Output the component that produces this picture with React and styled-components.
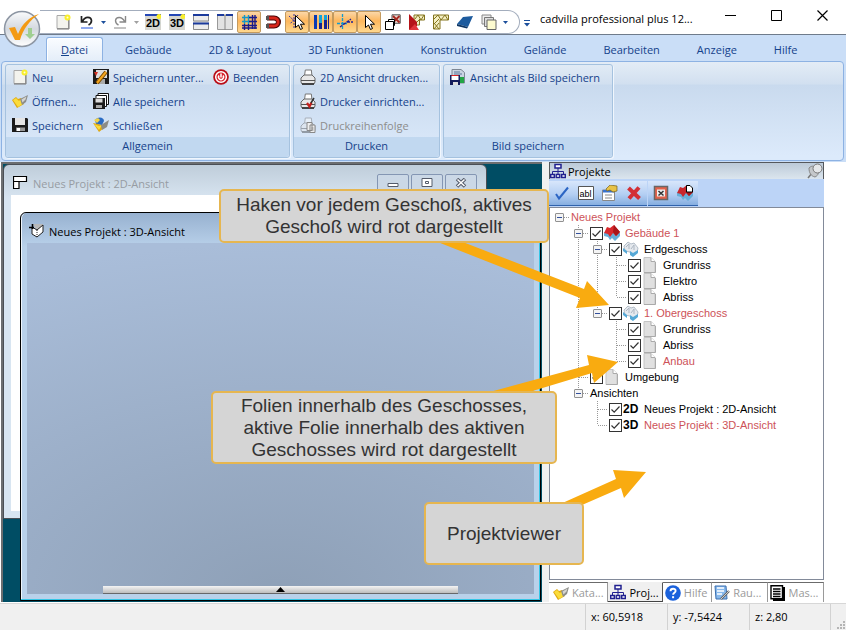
import React from 'react';
import styled, { createGlobalStyle, css } from 'styled-components';

const uiFont = '"Open Sans", "Noto Sans", sans-serif';
const treeFont = '"Liberation Sans", Arial, sans-serif';
const navy = '#15428b';

const GlobalStyle = createGlobalStyle`
  * {
    box-sizing: border-box;
  }

  body {
    margin: 0;
    background: #fff;
    font-family: ${uiFont};
    font-size: 11px;
  }

  button {
    margin: 0;
    padding: 0;
    border: none;
    background: none;
    font: inherit;
    color: inherit;
  }

  svg {
    display: block;
    flex: none;
  }
`;

const Window = styled.div`
  display: flex;
  flex-direction: column;
  min-height: 100vh;
  overflow: hidden;
`;

/* title bar */

const TitleBar = styled.header`
  position: relative;
  display: flex;
  align-items: flex-start;
  height: 35px;
  border-bottom: 1px solid #6f7b8b;
  padding: 0 1px 0 40px;
  background: #fff;
`;

const AppButton = styled.button`
  position: absolute;
  left: 3px;
  top: 10px;
  z-index: 2;
`;

const QuickBar = styled.div`
  display: flex;
  height: 24px;
  margin-top: 10px;
  padding: 0 9px 0 11px;
  border: 1px solid #a3adbd;
  border-left: none;
  border-radius: 0 12px 12px 0;
`;

const QuickButton = styled.button`
  display: flex;
  align-items: center;
  justify-content: center;
  width: 24px;
  height: 22px;
  ${({ $on }) => $on && css`
    border: 1px solid #c49a5e;
    border-radius: 2px;
    background: linear-gradient(#fbd7a8, #fdb65c 45%, #ffd88f);
  `}
`;

const Arrow = styled.button`
  display: flex;
  align-items: center;
  justify-content: center;
  width: 9px;
  color: ${({ $off }) => ($off ? '#a0a0a0' : '#1c4f9c')};
`;

const Overflow = styled(Arrow)`
  width: 14px;
  height: 24px;
  margin-top: 11px;
`;

const Title = styled.div`
  flex: 1;
  min-width: 0;
  padding: 9px 0 0 6px;
  font-size: 11px;
  line-height: 20px;
  white-space: nowrap;
  color: #000;
`;

const Caption = styled.button`
  display: flex;
  align-items: center;
  justify-content: center;
  width: 46px;
  height: 30px;
`;

/* ribbon */

const Tabs = styled.nav`
  display: flex;
  align-items: flex-end;
  gap: 7px;
  height: 26px;
  padding-left: 46px;
  background: #cadef7;
`;

const Tab = styled.button`
  height: 24px;
  padding: 0 14px;
  border: 1px solid transparent;
  border-bottom: none;
  border-radius: 3px 3px 0 0;
  line-height: 22px;
  white-space: nowrap;
  color: ${navy};
  ${({ $on }) => $on && css`
    border-color: #8db2e3;
    background: linear-gradient(#fafcff, #e4eef9);
    box-shadow: inset 1px 1px 0 #fff;
  `}
`;

const Ribbon = styled.div`
  display: flex;
  gap: 3px;
  height: 100px;
  padding: 2px 3px;
  border: 1px solid #8db2e3;
  border-radius: 4px;
  background: linear-gradient(#e3ecf6, #d2e0f0 22%, #c9daee 24%, #dceafb 96%);
`;

const RibbonWrap = styled.div`
  padding: 0 2px 1px 1px;
  background: #cadef7;
`;

const Group = styled.section`
  display: flex;
  flex-direction: column;
  width: ${({ $width }) => $width}px;
  height: 94px;
  border: 1px solid #a5c2df;
  border-radius: 3px;
  box-shadow: 1px 1px 0 #f0f6fd;
`;

const GroupBody = styled.div`
  display: grid;
  grid-template-columns: ${({ $cols }) => $cols};
  grid-template-rows: repeat(3, 24px);
  grid-auto-flow: column;
  padding: 0 6px;
`;

const GroupLabel = styled.div`
  flex: 1;
  border-radius: 0 0 3px 3px;
  background: #c1d8f0;
  line-height: 18px;
  text-align: center;
  color: ${navy};
`;

const Command = styled.button`
  display: flex;
  align-items: center;
  gap: 4px;
  white-space: nowrap;
  color: ${navy};

  &:disabled {
    color: #8d8d8d;
  }
`;

/* workspace */

const Workspace = styled.main`
  position: relative;
  display: flex;
  flex: 1;
  padding-right: 22px;
`;

const Desktop = styled.div`
  position: relative;
  flex: 1;
  margin-left: 1px;
  border-top: 2px solid #6c6e70;
  border-left: 2px solid #6c6e70;
  background: #004d64;
`;

const Splitter = styled.div`
  width: 7px;
  background: #f0f0f0;
`;

const View = styled.section`
  position: absolute;
  display: flex;
  flex-direction: column;
`;

const PlanView = styled(View)`
  top: 0;
  left: 0;
  right: 55px;
  bottom: 83px;
  padding: 0 7px 7px;
  border: 1px solid #4b4f55;
  border-radius: 6px 6px 0 0;
  background: linear-gradient(#bfcdda, #d8e5f1 34px);
`;

const ModelView = styled(View)`
  top: 48px;
  left: 17px;
  right: 1px;
  bottom: 1px;
  padding: 0 6px 6px;
  border: 1px solid #000;
  border-radius: 6px 6px 0 0;
  background: linear-gradient(#97b1d0, #b9d1ea 34px);
  box-shadow: inset -1px -1px 0 #35c6e6, inset 1px 0 0 #eef5fc;
`;

const ViewTitle = styled.div`
  display: flex;
  align-items: center;
  gap: 4px;
  height: 30px;
  padding: 6px 0 0 2px;
  color: ${({ $off }) => ($off ? '#979ca3' : '#000')};
`;

const ViewButtons = styled.div`
  display: flex;
  gap: 2px;
  margin-left: auto;
  padding-right: 2px;
`;

const ViewButton = styled.button`
  display: flex;
  align-items: center;
  justify-content: center;
  width: 32px;
  height: 18px;
  border: 1px solid #8496b3;
  border-radius: 2px 2px 0 0;
  background: #cbd8e6;
`;

const Paper = styled.div`
  flex: 1;
  background: #fff;
`;

const Scene = styled.div`
  display: flex;
  align-items: flex-end;
  flex: 1;
  padding: 0 76px;
  background: radial-gradient(ellipse 120% 100% at 50% 100%, #8ea0b7, #a9bdd9);
`;

const Drawer = styled.button`
  display: flex;
  align-items: center;
  justify-content: center;
  flex: 1;
  height: 8px;
  border-bottom: 1px solid #67686a;
  background: linear-gradient(#f4f4f4, #bdbdbd);
`;

/* project panel */

const Panel = styled.aside`
  display: flex;
  flex-direction: column;
  width: 275px;
`;

const PanelHeader = styled.div`
  display: flex;
  align-items: center;
  justify-content: space-between;
  height: 17px;
  border: 1px solid #55585c;
  border-bottom: none;
  background: linear-gradient(#bccad8, #dbe5ee);
`;

const PanelName = styled.h2`
  display: flex;
  align-items: center;
  gap: 2px;
  margin: 0;
  font-size: 11px;
  font-weight: 400;
`;

const PanelTools = styled.div`
  display: flex;
  gap: 1px;
  height: 28px;
  padding: 2px 0 1px;
  background: #bcd4f7;
`;

const ToolSet = styled.div`
  display: flex;
  align-items: center;
  padding: 0 1px;
  border-bottom: 1px solid #2f62ad;
  background: linear-gradient(#d8e6fb, #b4cff3 55%, #86aee0);
`;

const Tool = styled.button`
  display: flex;
  justify-content: center;
  width: 24px;
`;

const TreeBox = styled.div`
  flex: 1;
  padding-top: 1px;
  border: 1px solid #828a99;
  background: #fff;
  font-family: ${treeFont};
  font-size: 11px;
`;

const TreeRow = styled.div`
  display: flex;
  align-items: center;
  height: 16px;
  white-space: nowrap;
  color: ${({ $active }) => ($active ? '#cd5258' : '#000')};
`;

const dots = 'repeating-linear-gradient(#999 0 1px, transparent 1px 2px)';
const dotsAcross = 'repeating-linear-gradient(90deg, #999 0 1px, transparent 1px 2px)';

const Guide = styled.span`
  display: flex;
  align-items: center;
  width: 19px;
  height: 16px;
  padding-left: 5px;
  background-repeat: no-repeat;
  background-image: ${({ $kind }) => (/[LTE]/.test($kind) ? dots : 'none')},
    ${({ $kind }) => (/[TEH]/.test($kind) ? dotsAcross : 'none')};
  background-size: 1px ${({ $kind }) => ($kind === 'E' ? 8 : 16)}px, 10px 1px;
  background-position: 9px 0, 10px 8px;
`;

const Expander = styled.button`
  display: flex;
  align-items: center;
  justify-content: center;
  width: 9px;
  height: 9px;
  border: 1px solid #919191;
  border-radius: 1px;
  background: #f4f4f4;

  &::after {
    content: '';
    width: 5px;
    height: 1px;
    background: #32509c;
  }
`;

const Entry = styled.label`
  display: flex;
  align-items: center;
  height: 16px;
  padding-left: 2px;
`;

const Check = styled.input`
  appearance: none;
  width: 13px;
  height: 13px;
  margin: 0 1px 0 0;
  border: 1px solid #333;
  background: #fff;

  &:checked {
    background: #fff url("data:image/svg+xml,%3Csvg xmlns='http://www.w3.org/2000/svg' viewBox='0 0 11 11'%3E%3Cpath d='M1.5 5.5l2.7 2.7 5.3-5.7' fill='none' stroke='%23333' stroke-width='1.2'/%3E%3C/svg%3E") center / 11px;
  }
`;

const EntryIcon = styled.span`
  display: flex;
  align-items: center;
  width: 18px;
  margin-right: 3px;
  font-weight: 700;
  font-size: 12px;
  color: #000;
`;

const PanelTabs = styled.div`
  display: grid;
  grid-template-columns: 59fr 54fr 49fr 55fr 56fr;
  height: 20px;
  margin-top: 2px;
`;

const PanelTab = styled.button`
  display: flex;
  align-items: center;
  gap: 3px;
  min-width: 0;
  padding: 0 2px;
  border-top: 1px solid #6b6b6b;
  border-right: 1px solid #9a9a9a;
  white-space: nowrap;
  color: #9a9a9a;

  &:first-child {
    padding-left: 4px;
  }

  ${({ $on }) => $on && css`
    border-top-color: #f0f0f0;
    border-right-color: #555;
    border-bottom: 1px solid #444;
    background: #f0f0f0;
    color: #000;
  `}
`;

/* callouts */

const Notes = styled.div`
  position: absolute;
  top: 0;
  right: 0;
  width: 640px;
  height: 440px;
  pointer-events: none;
`;

const Note = styled.div`
  position: absolute;
  left: ${({ $x }) => $x}px;
  top: ${({ $y }) => $y}px;
  display: flex;
  align-items: center;
  justify-content: center;
  width: ${({ $w }) => $w}px;
  height: ${({ $h }) => $h}px;
  border: 2px solid #e6b650;
  border-radius: 5px;
  background: #d5d5d5;
  font-family: ${treeFont};
  font-size: 19px;
  line-height: 22px;
  text-align: center;
  white-space: pre-line;
  color: #333;
`;

const StatusBar = styled.footer`
  position: relative;
  display: flex;
  align-items: stretch;
  justify-content: flex-end;
  height: 27px;
  margin-top: 1px;
  padding-right: 15px;
  border-top: 1px solid #d7d7d7;
  background: #f0f0f0;
`;

const Cell = styled.div`
  width: 82px;
  padding-left: 5px;
  border-left: 1px solid #d2d2d2;
  line-height: 26px;

  &:last-of-type {
    border-right: 1px solid #d2d2d2;
  }
`;

const Grip = styled.svg`
  position: absolute;
  right: 0;
  bottom: 0;
`;

/* icons, all on a 16 px grid */

const I = ({ children, size = 16 }) => (
  <svg width={size} height={size} viewBox="0 0 16 16" fill="none" aria-hidden="true">{children}</svg>
);

const icons = {
  page: (
    <I>
      <path d="M2 1.5h11.5v13H2z" fill="#f3f3ee" stroke="#a9a9a9" />
      <path d="M2 15h12V5" stroke="#777" />
      <circle cx="12.5" cy="3.5" r="3" fill="#f8ee2c" />
      <circle cx="12.5" cy="3.5" r="1" fill="#fffde0" />
    </I>
  ),
  undo: (
    <I>
      <path d="M2.500 2v6h6M3.500 7.500C6 2 12 2.500 12.500 6.500c0 2-1 3.500-3 4.500" stroke="#222" strokeWidth="1.700" />
      <path d="M2 14h12" stroke="#2255dd" />
    </I>
  ),
  redo: (
    <I>
      <path d="M13.500 2v6h-6M12.500 7.500C10 2 4 2.500 3.500 6.500c0 2 1 3.500 3 4.500" stroke="#888" strokeWidth="1.400" />
      <path d="M2 14h12" stroke="#888" />
    </I>
  ),
  tile2d: <Sheet label="2D" />,
  tile3d: <Sheet label="3D" />,
  rows: (
    <I>
      <path d="M0 0h16v16H0z" fill="#dedede" />
      <path d="M.5 2v5h15V2M.5 10v5.500h15V10" stroke="#8b8b8b" fill="#ececec" />
      <path d="M0 1h16M0 9.500h16" stroke="#1b3a9c" strokeWidth="2" />
    </I>
  ),
  cols: (
    <I>
      <path d="M.5 1.500h15v14H.5z" fill="#e2e2e2" stroke="#999" />
      <path d="M0 1h7M9 1h7" stroke="#1b3a9c" strokeWidth="2" />
      <path d="M8 0v16" stroke="#888" />
    </I>
  ),
  grid: (
    <I>
      <path d="M1 3.500h9M1 7.500h9M3.500 1v9M7.500 1v9" stroke="#1598c8" strokeWidth="1.400" />
      <path d="M11.500 1v14M14 1v14M8 3.500h8M8 7.500h8M1 11.500h15M1 14h15M3.500 10v6M7.500 10v6" stroke="#1a1a8c" strokeWidth="1.400" />
    </I>
  ),
  magnet: (
    <I>
      <path d="M2 4h7c6 0 6 8 0 8H2" stroke="#4b0505" strokeWidth="5" />
      <path d="M3 4h6c5.500 0 5.500 8 0 8H3" stroke="#d8261c" strokeWidth="2.800" />
      <path d="M1 2h3v4H1zM1 10h3v4H1z" fill="#555" />
    </I>
  ),
  snap: (
    <I>
      <path d="M0 2l12 11M9 1L1 10M5 0v14" stroke="#3434a4" strokeDasharray="2 1" />
      <Pointer x={6} />
    </I>
  ),
  bars: (
    <I>
      <path d="M2.500 1v14" stroke="#0b3bb5" strokeWidth="3" />
      <path d="M7.500 1v8M12.500 1v5" stroke="#15a3d8" strokeWidth="3" />
      <path d="M12.500 6v9M7.500 9v6" stroke="#152090" strokeWidth="3" />
      <path d="M15.500 1v14" stroke="#152090" />
    </I>
  ),
  cross: (
    <I>
      <path d="M5.500 0v16M0 9.500h10" stroke="#139bcf" strokeWidth="1.300" strokeDasharray="3 1" />
      <path d="M3 13L14 5M10 8h6" stroke="#20209a" strokeWidth="1.300" strokeDasharray="3 1" />
    </I>
  ),
  pointer: <I><Pointer x={4} /></I>,
  removeBox: (
    <I>
      <path d="M7 .8h8.200v8.500H7z" fill="#e9d6cf" stroke="#555" />
      <path d="M8 2l6.500 6.500M14.500 2L8 8.500" stroke="#a5281f" strokeWidth="1.800" />
      <path d="M3.500 5.500h6v6h-6z" fill="#fff" stroke="#000" />
      <path d="M.5 7.500h8v8h-8z" fill="#fff" stroke="#000" />
    </I>
  ),
  wallRed: (
    <I>
      <path d="M5 1h10.500v5h-5v5H5z" fill="#f3eec3" stroke="#83741f" />
      <path d="M6 5l3-4 3 5 3-5M6 10l5-5" stroke="#83741f" />
      <path d="M0 0l8 8v4L0 16z" fill="#b51318" />
      <path d="M0 16l6-6 4 6z" fill="#e0343a" />
    </I>
  ),
  wall: (
    <I>
      <path d="M.5 1h15v5H7v9H.5z" fill="#f3eec3" stroke="#83741f" />
      <path d="M1 5l4-4 3 5 4-5 3 5M1 10l5-5M1 15l5-6M1 9l5 6" stroke="#83741f" />
    </I>
  ),
  slab: (
    <I>
      <path d="M6 3l10-1-5 11-11-3z" fill="#1d5b9e" />
      <path d="M0 10l11 3-1 1.500L0 12z" fill="#0d3564" />
    </I>
  ),
  sheets: (
    <I>
      <path d="M1 1h9v9H1z" fill="#eee" stroke="#888" />
      <path d="M3.500 3.500h9v9h-9z" fill="#ddd" stroke="#777" />
      <path d="M6 6h9v9.500H6z" fill="#fdfbd0" stroke="#666" />
    </I>
  ),
  open: (
    <I>
      <path d="M0 7l4-3 2 2 3-1 3 6-7 4z" fill="#dfa812" />
      <path d="M1 7l3-2 3 3 2-2 2 5-5 3z" fill="#fbdc3a" />
      <path d="M8 6l8-4-2 7-4 3z" fill="#8d8d88" />
      <path d="M9.500 6.500l5-3-1 3-3 3z" fill="#d5d5d0" />
    </I>
  ),
  save: (
    <I>
      <path d="M0 1h15l1 1v13H0z" fill="#1b1b1b" />
      <path d="M3 1h10v7H3z" fill="#e5e5e5" />
      <path d="M4 10.500h9V14H4z" fill="#999" />
      <path d="M5 11h3v3H5z" fill="#fff" />
    </I>
  ),
  saveAs: (
    <I>
      <path d="M0 0h16v15H0z" fill="#1b1b1b" />
      <path d="M3 1h11v8H3z" fill="#ddd" />
      <path d="M4 10h8v5H4z" fill="#aaa" />
      <path d="M1 3h4L3 7z" fill="#d43222" />
      <path d="M4 14L13 3" stroke="#7a4b00" strokeWidth="4" />
      <path d="M4 14L13 3" stroke="#f4a51f" strokeWidth="2" />
    </I>
  ),
  saveAll: (
    <I>
      <path d="M5 .5h10.500v11H5z" fill="#fff" stroke="#111" />
      <path d="M3 2.500h10.500v11H3z" fill="#fff" stroke="#111" />
      <path d="M0 5h12v11H0z" fill="#1b1b1b" />
      <path d="M2.500 5.500h7v4h-7z" fill="#ddd" />
      <path d="M3 12h6v3H3z" fill="#aaa" />
    </I>
  ),
  close: (
    <I>
      <path d="M2 3c3-4 9-3 9 1l-2 4-6-1z" fill="#2b6cc4" />
      <path d="M0 6l5 1 3 1 3 3-5 4z" fill="#dfa812" />
      <path d="M1 7l5 2 3-1-3 5z" fill="#fbdc3a" />
      <path d="M8 8l8-5-2 7-5 3z" fill="#8c8c88" />
      <path d="M1 3l4-2 2 2-3 3z" fill="#f2d34a" />
    </I>
  ),
  quit: (
    <I>
      <circle cx="8" cy="8" r="7.800" fill="#b90e18" />
      <circle cx="8" cy="8" r="5.300" fill="#d9202a" stroke="#fff" strokeWidth="1.500" />
      <path d="M6 6.500a2.500 2.500 0 1 0 4 0M8 4.500v4" stroke="#fff" strokeWidth="1.500" />
    </I>
  ),
  print: <I><Printer /></I>,
  printSetup: (
    <I>
      <Printer />
      <path d="M7 10l2.500 3.500 2-4" stroke="#c4201c" strokeWidth="2.200" />
      <path d="M11 10l3-5" stroke="#333" strokeWidth="1.500" />
    </I>
  ),
  printOrder: (
    <I>
      <g opacity=".45"><Printer /></g>
      <path d="M7 5.500h5v8H7zM10 8h5v7.500h-5z" fill="#eee" stroke="#888" />
      <path d="M11.500 11h2M11.500 13h2" stroke="#888" />
    </I>
  ),
  image: (
    <I>
      <path d="M2 .5h9l3.500 3V14H2z" fill="#c9d4e2" stroke="#7d8794" />
      <path d="M10 8h4v6h-4z" fill="#22a545" />
      <path d="M4 3h6M4 5h8" stroke="#5b7599" />
      <path d="M0 6h10v10H0z" fill="#131c5c" />
      <path d="M1.500 7h7v4h-7z" fill="#fff" />
      <path d="M1.500 6.500h7" stroke="#d22" />
      <path d="M3 13h5v3H3z" fill="#ddd" />
    </I>
  ),
  plan: <I><path d="M.5 1.500h13v5H6v7H.5zM.5 6.500H6" fill="#fff" stroke="#000" strokeWidth="1.200" /></I>,
  model: (
    <I>
      <path d="M4 1h10v6l-5 3z" fill="#b9b9b9" />
      <path d="M3 4l5 3 6-5v7l-6 5-5-3z" fill="#fff" stroke="#222" />
      <path d="M8 7v7" stroke="#222" strokeDasharray="1 1" />
      <path d="M0 4.500h5M3.500 1v5" stroke="#000" strokeWidth="1.600" />
    </I>
  ),
  nodes: (
    <I>
      <path d="M8 5v4M2.500 11V8.500h11V11M8 8v3" stroke="#20208f" />
      <path d="M5 1.500h6v3.500H5z" fill="#fff" stroke="#20208f" strokeWidth="1.500" />
      <path d="M.7 11.500h3.600v3H.7zM6.200 11.500h3.600v3H6.200zM11.700 11.500h3.600v3h-3.600z" fill="#fff" stroke="#20208f" strokeWidth="1.400" />
    </I>
  ),
  pin: (
    <I>
      <path d="M1 15l4-5" stroke="#777" strokeWidth="1.500" />
      <path d="M2 5c3-3 6-2 8 1s2 6-2 8c-4-1-6-4-6-9z" fill="#c4c7ca" stroke="#888" />
      <circle cx="10.500" cy="5.500" r="4.500" fill="#e5e7e9" stroke="#777" />
    </I>
  ),
  tick: <I><path d="M2 9l3 4.500L14 2.500" stroke="#2b65c4" strokeWidth="2" /></I>,
  rename: (
    <I>
      <path d="M.5 1.500h15v13H.5z" fill="#fff" stroke="#555" />
      <text x="1.500" y="11.500" fontFamily="Liberation Sans" fontSize="9" fill="#000">abl</text>
    </I>
  ),
  props: (
    <I>
      <path d="M.5 5h12v10.500H.5z" fill="#fff" stroke="#888" />
      <path d="M1 5h11v2.500H1z" fill="#3973ce" />
      <path d="M3 10h7M3 13h7" stroke="#888" />
      <path d="M4 4l4-4 7 1v5l-4 1-3-2-3 1z" fill="#e7c248" stroke="#75601c" strokeWidth=".7" />
    </I>
  ),
  remove: <I><path d="M2.500 3l11 10.500M13 2.500L3 13.500" stroke="#d32f35" strokeWidth="4" /></I>,
  closeBox: (
    <I>
      <path d="M1.500 1.500h13v13h-13z" fill="#e2624b" stroke="#666" strokeWidth="1.500" />
      <path d="M4 4.500h8v7H4z" fill="#eee" />
      <path d="M5.500 6l5 4.500M10.500 6l-5 4.500" stroke="#333" strokeWidth="1.500" />
    </I>
  ),
  newHouse: (
    <I>
      <House roof="#c8262c" />
      <path d="M9.500.5h3.500l2.500 2.500v4h-6z" fill="#fff" stroke="#000" />
    </I>
  ),
  house: <I><House roof="#d8292d" /></I>,
  storey: (
    <I>
      <path d="M1 5l4-4 3 2 3-1 4 5-1 5-5 3-2-4-5-1z" fill="#e5e9ee" stroke="#b4bec9" />
      <path d="M3 6l3-3v5M8 8l3-4v5" stroke="#adb7c3" />
      <path d="M0 7l4 3v3L0 10zM7 10l3 2v4l-3-2zM10 12l5-3v3l-5 4z" fill="#55a8d6" />
    </I>
  ),
  layer: (
    <I>
      <path d="M2 .5h7l4 4v11H2z" fill="#e0e0e0" stroke="#c4c4c4" />
      <path d="M9 .5v4h4" fill="#fff" stroke="#aaa" />
      <path d="M2 15.500h11.500V5" stroke="#aaa" />
    </I>
  ),
  help: (
    <I>
      <circle cx="8" cy="8" r="7.800" fill="#1b62dc" />
      <path d="M5.500 6.200C5.500 2.800 10.800 3 10.600 6c-.1 1.700-2.500 1.800-2.500 3.700" stroke="#fff" strokeWidth="1.900" />
      <path d="M7.100 11.200h2v2h-2z" fill="#fff" />
    </I>
  ),
  rooms: (
    <I>
      <path d="M1 1h11l1 13H2z" fill="#88b9ec" stroke="#3b6faf" />
      <path d="M3 3h7M3 6h7M3 9h5" stroke="#fff" strokeWidth="1.500" />
      <path d="M7 14l8-8" stroke="#666" strokeWidth="2.400" />
      <path d="M7 14l8-8" stroke="#ccc" />
    </I>
  ),
  measures: (
    <I>
      <path d="M3 2h12v14H3z" fill="#000" />
      <path d="M1 .7h11.500v13H1z" fill="#fff" stroke="#000" strokeWidth="1.400" />
      <path d="M3 4h7.500M3 6.500h7.500M3 9h7.500M3 11.500h7.500" stroke="#000" strokeWidth="1.300" />
    </I>
  ),
};

function Sheet({ label }) {
  return (
    <I>
      <path d="M0 0h16v16H0z" fill="#d6d6d0" />
      <path d="M0 1h16" stroke="#2446b5" strokeWidth="2" />
      <text x="8" y="13" textAnchor="middle" fontFamily="Liberation Sans" fontWeight="700" fontSize="11" fill="#000">{label}</text>
      <circle cx="14" cy="2.500" r="2.500" fill="#f8ee2c" />
    </I>
  );
}

function Pointer({ x }) {
  return (
    <path
      transform={`translate(${x} 1)`}
      d="M.5.500v12l3-2.500 2 4.500 2-1-2-4.300h4z"
      fill="#fff"
      stroke="#000"
    />
  );
}

function Printer() {
  return (
    <>
      <path d="M4.500 7l.8-6h6l.7 6" fill="#fff" stroke="#777" />
      <path d="M1 9l3-3h8l3 3v4l-1 2H2l-1-2z" fill="#e8e8e8" stroke="#666" />
      <path d="M1 11.500h14" stroke="#555" />
      <path d="M2 15h12" stroke="#222" strokeWidth="1.500" />
    </>
  );
}

function House({ roof }) {
  return (
    <>
      <path d="M0 8l3-2 9 1 4 1v3l-5 5-3-3-2 2-2-3-4-1z" fill="#67aed8" />
      <path d="M0 8l3-6 3 1 4-3 6 7-4 4-3-3-3 4-2-3z" fill={roof} />
      <path d="M10 0l6 7-4 4-3-4z" fill="#a91519" />
    </>
  );
}

const Down = () => (
  <svg width="5" height="3" viewBox="0 0 5 3"><path d="M0 0h5L2.500 3z" fill="currentColor" /></svg>
);

const quickItems = [
  { icon: 'page', name: 'Neu' },
  { icon: 'undo', name: 'Rückgängig', menu: true },
  { icon: 'redo', name: 'Wiederholen', menu: true, off: true },
  { icon: 'tile2d', name: '2D-Ansicht' },
  { icon: 'tile3d', name: '3D-Ansicht' },
  { icon: 'rows', name: 'Untereinander' },
  { icon: 'cols', name: 'Nebeneinander' },
  { icon: 'grid', name: 'Raster', on: true },
  { icon: 'magnet', name: 'Magnet' },
  { icon: 'snap', name: 'Fangen', on: true },
  { icon: 'bars', name: 'Linien', on: true },
  { icon: 'cross', name: 'Hilfslinien', on: true },
  { icon: 'pointer', name: 'Auswahl', on: true },
  { icon: 'removeBox', name: 'Ausblenden' },
  { icon: 'wallRed', name: 'Wand rot' },
  { icon: 'wall', name: 'Wand' },
  { icon: 'slab', name: 'Decke' },
  { icon: 'sheets', name: 'Folien', menu: true },
];

const tabNames = ['Gebäude', '2D & Layout', '3D Funktionen', 'Konstruktion', 'Gelände', 'Bearbeiten', 'Anzeige', 'Hilfe'];

const groups = [
  {
    name: 'Allgemein',
    width: 285,
    cols: '81px 120px 1fr',
    items: [
      ['page', 'Neu'],
      ['open', 'Öffnen...'],
      ['save', 'Speichern'],
      ['saveAs', 'Speichern unter...'],
      ['saveAll', 'Alle speichern'],
      ['close', 'Schließen'],
      ['quit', 'Beenden'],
    ],
  },
  {
    name: 'Drucken',
    width: 147,
    cols: '1fr',
    items: [
      ['print', '2D Ansicht drucken...'],
      ['printSetup', 'Drucker einrichten...'],
      ['printOrder', 'Druckreihenfolge', true],
    ],
  },
  {
    name: 'Bild speichern',
    width: 170,
    cols: '1fr',
    items: [['image', 'Ansicht als Bild speichern']],
  },
];

// one letter per level: L line, T branch, E last branch, H dash only, . empty
const tree = [
  { guides: 'H', open: true, text: 'Neues Projekt', active: true },
  { guides: '.T', open: true, check: true, icon: icons.house, text: 'Gebäude 1', active: true },
  { guides: '.LT', open: true, check: true, icon: icons.storey, text: 'Erdgeschoss' },
  { guides: '.LLT', check: true, icon: icons.layer, text: 'Grundriss' },
  { guides: '.LLT', check: true, icon: icons.layer, text: 'Elektro' },
  { guides: '.LLE', check: true, icon: icons.layer, text: 'Abriss' },
  { guides: '.LE', open: true, check: true, icon: icons.storey, text: '1. Obergeschoss', active: true },
  { guides: '.L.T', check: true, icon: icons.layer, text: 'Grundriss' },
  { guides: '.L.T', check: true, icon: icons.layer, text: 'Abriss' },
  { guides: '.L.E', check: true, icon: icons.layer, text: 'Anbau', active: true },
  { guides: '.T', check: true, icon: icons.layer, text: 'Umgebung' },
  { guides: '.E', open: true, text: 'Ansichten' },
  { guides: '..T', check: true, icon: '2D', text: 'Neues Projekt : 2D-Ansicht' },
  { guides: '..E', check: true, icon: '3D', text: 'Neues Projekt : 3D-Ansicht', active: true },
];

const panelTabs = [
  ['open', 'Kata...'],
  ['nodes', 'Proj...'],
  ['help', 'Hilfe'],
  ['rooms', 'Rau...'],
  ['measures', 'Mas...'],
];

const TreeItem = ({ guides, open, check, icon, text, active }) => (
  <TreeRow $active={active}>
    {guides.split('').map((kind, i) => (
      <Guide key={i} $kind={kind}>
        {open && i === guides.length - 1 && <Expander aria-label={`${text} zuklappen`} />}
      </Guide>
    ))}
    <Entry as={check ? 'label' : 'span'}>
      {check && <Check type="checkbox" defaultChecked />}
      {icon && <EntryIcon>{icon}</EntryIcon>}
      {text}
    </Entry>
  </TreeRow>
);

const App = () => (
  <>
    <GlobalStyle />
    <Window>
      <TitleBar>
        <AppButton aria-label="cadvilla">
          <svg width="40" height="40" viewBox="0 0 40 40">
            <defs>
              <linearGradient id="orb" x1="0" y1="0" x2="0" y2="1">
                <stop offset="0" stopColor="#fafbfc" />
                <stop offset=".5" stopColor="#d3d8df" />
                <stop offset="1" stopColor="#fff" />
              </linearGradient>
            </defs>
            <circle cx="19" cy="19" r="17.500" fill="url(#orb)" stroke="#8d96a3" strokeWidth="1.500" />
            <path d="M22 24h3v-6h4v6h3l-5 5z" fill="#a0cf92" />
            <path d="M6 18l6-1 3 7C19 14 26 7 36 4 27 10 20 19 17 30h-5z" fill="#f39a13" />
          </svg>
        </AppButton>
        <QuickBar>
          {quickItems.map(({ icon, name, on, menu, off }) => (
            <React.Fragment key={icon}>
              <QuickButton $on={on} aria-label={name}>{icons[icon]}</QuickButton>
              {menu && <Arrow $off={off} aria-label={`${name} Auswahl`}><Down /></Arrow>}
            </React.Fragment>
          ))}
        </QuickBar>
        <Overflow aria-label="Anpassen">
          <svg width="6" height="7" viewBox="0 0 6 7"><path d="M0 .5h6" stroke="currentColor" /><path d="M0 3h6L3 6.500z" fill="currentColor" /></svg>
        </Overflow>
        <Title>cadvilla professional plus 12...</Title>
        <Caption aria-label="Minimieren">
          <svg width="11" height="11"><path d="M0 5.500h11" stroke="#000" /></svg>
        </Caption>
        <Caption aria-label="Maximieren">
          <svg width="11" height="11"><path d="M.5.500h10v10H.5z" fill="none" stroke="#000" /></svg>
        </Caption>
        <Caption aria-label="Schließen">
          <svg width="11" height="11"><path d="M.5.500l10 10M10.500.500l-10 10" stroke="#000" strokeWidth="1.200" /></svg>
        </Caption>
      </TitleBar>

      <Tabs>
        <Tab $on><u>D</u>atei</Tab>
        {tabNames.map((name) => <Tab key={name}>{name}</Tab>)}
      </Tabs>
      <RibbonWrap>
        <Ribbon>
          {groups.map((group) => (
            <Group key={group.name} $width={group.width}>
              <GroupBody $cols={group.cols}>
                {group.items.map(([icon, text, off]) => (
                  <Command key={text} disabled={off}>{icons[icon]}{text}</Command>
                ))}
              </GroupBody>
              <GroupLabel>{group.name}</GroupLabel>
            </Group>
          ))}
        </Ribbon>
      </RibbonWrap>

      <Workspace>
        <Desktop>
          <PlanView>
            <ViewTitle $off>
              {icons.plan}
              Neues Projekt : 2D-Ansicht
              <ViewButtons>
                <ViewButton aria-label="Minimieren">
                  <svg width="12" height="10"><path d="M1 5.500h10v3H1z" fill="#fff" stroke="#555c6b" /></svg>
                </ViewButton>
                <ViewButton aria-label="Maximieren">
                  <svg width="12" height="10"><path d="M1 .5h10v8H1zM4.500 3.500h3v2h-3z" fill="#fff" stroke="#555c6b" /></svg>
                </ViewButton>
                <ViewButton aria-label="Schließen">
                  <svg width="12" height="10">
                    <path d="M2 1l8 7.500M10 1L2 8.500" stroke="#555c6b" strokeWidth="3.600" />
                    <path d="M2.500 1.500l7 6.500M9.500 1.500l-7 6.500" stroke="#fff" strokeWidth="1.500" />
                  </svg>
                </ViewButton>
              </ViewButtons>
            </ViewTitle>
            <Paper />
          </PlanView>
          <ModelView>
            <ViewTitle>
              {icons.model}
              Neues Projekt : 3D-Ansicht
            </ViewTitle>
            <Scene>
              <Drawer aria-label="Leiste öffnen">
                <svg width="9" height="5"><path d="M0 5h9L4.500 0z" fill="#000" /></svg>
              </Drawer>
            </Scene>
          </ModelView>
        </Desktop>
        <Splitter />
        <Panel>
          <PanelHeader>
            <PanelName>{icons.nodes}Projekte</PanelName>
            {icons.pin}
          </PanelHeader>
          <PanelTools>
            <ToolSet>
              {['tick', 'rename', 'props', 'remove'].map((name) => (
                <Tool key={name} aria-label={name}>{icons[name]}</Tool>
              ))}
            </ToolSet>
            <ToolSet>
              {['closeBox', 'newHouse'].map((name) => (
                <Tool key={name} aria-label={name}>{icons[name]}</Tool>
              ))}
            </ToolSet>
          </PanelTools>
          <TreeBox>
            {tree.map((item, i) => <TreeItem key={i} {...item} />)}
          </TreeBox>
          <PanelTabs>
            {panelTabs.map(([icon, text]) => (
              <PanelTab key={text} $on={text === 'Proj...'}>{icons[icon]}{text}</PanelTab>
            ))}
          </PanelTabs>
        </Panel>

        <Notes>
          <svg width="640" height="440" viewBox="206 162 640 440" fill="#f9ab10">
            <path d="M430 239L580 298 576 308 609 305 587 281 584 289 455 239z" />
            <path d="M486 393L589 365 587 355 618 362 594 383 592 373 526 393z" />
            <path d="M558 505L616 479 613 470 646 472 624 498 621 488 582 505z" />
          </svg>
          <Note $x={13} $y={27} $w={330} $h={54}>{'Haken vor jedem Geschoß, aktives\nGeschoß wird rot dargestellt'}</Note>
          <Note $x={5} $y={229} $w={346} $h={73}>{'Folien innerhalb des Geschosses,\naktive Folie innerhalb des aktiven\nGeschosses wird rot dargestellt'}</Note>
          <Note $x={218} $y={340} $w={160} $h={63}>Projektviewer</Note>
        </Notes>
      </Workspace>

      <StatusBar>
        <Cell>x: 60,5918</Cell>
        <Cell>y: -7,5424</Cell>
        <Cell>z: 2,80</Cell>
        <Grip width="9" height="9" fill="#b5b5b5">
          <path d="M6 0h2v2H6zM3 3h2v2H3zM6 3h2v2H6zM0 6h2v2H0zM3 6h2v2H3zM6 6h2v2H6z" />
        </Grip>
      </StatusBar>
    </Window>
  </>
);

export default App;
